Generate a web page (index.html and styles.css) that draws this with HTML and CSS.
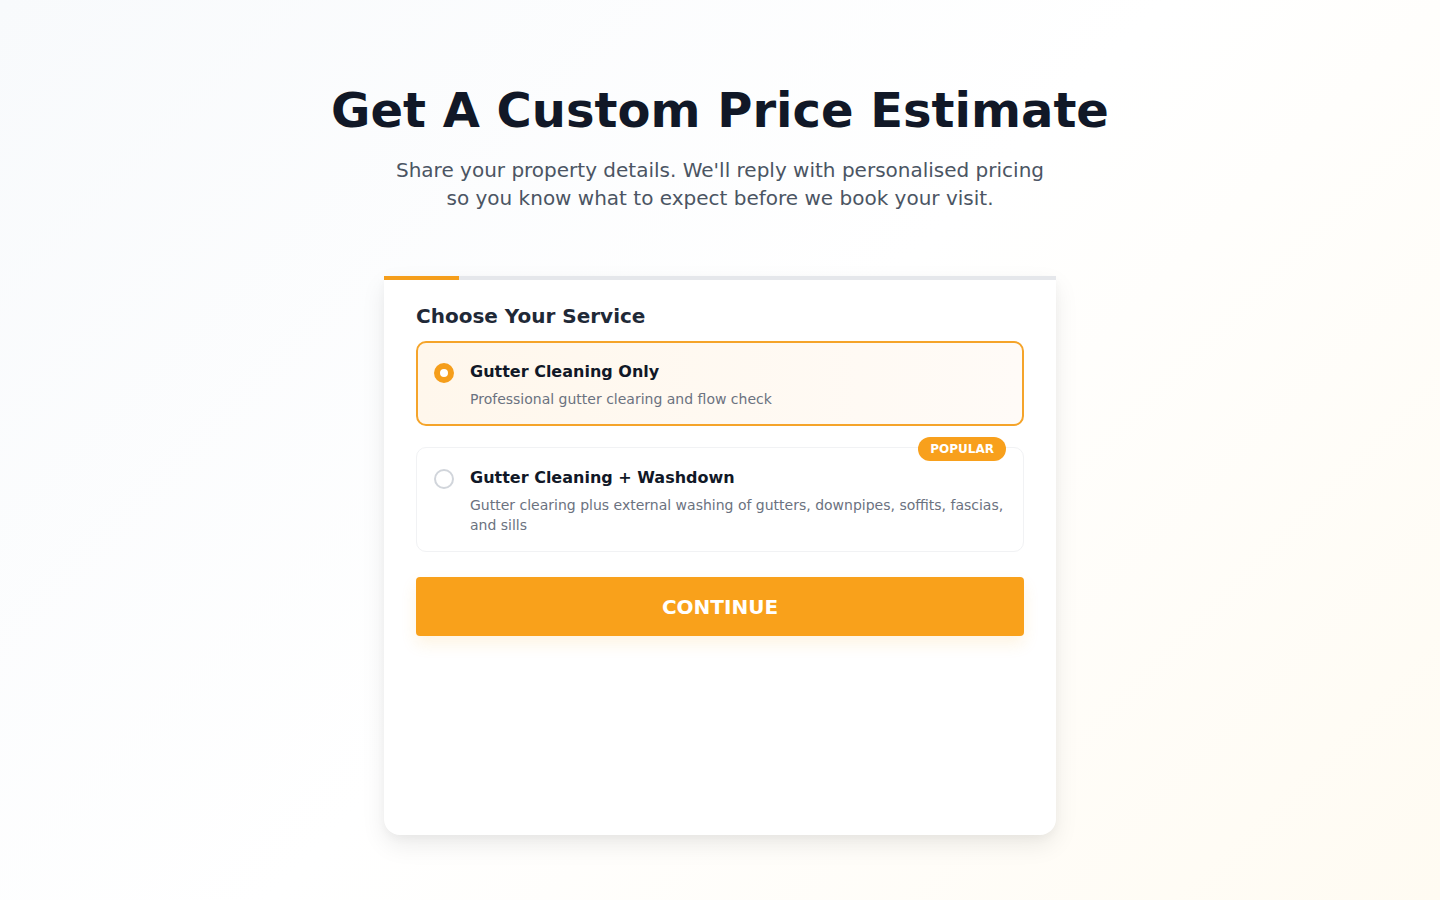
FILE: index.html
```html
<!DOCTYPE html>
<html lang="en">
<head>
<meta charset="utf-8">
<title>Get A Custom Price Estimate</title>
<link rel="stylesheet" href="styles.css">
</head>
<body>
<main class="page">
  <header class="intro">
    <h1 class="title">Get A Custom Price Estimate</h1>
    <p class="subtitle">Share your property details. We'll reply with personalised pricing<br>so you know what to expect before we book your visit.</p>
  </header>
  <section class="card">
    <div class="progress"><div class="progress-fill" style="width: 11.2%"></div></div>
    <div class="card-body">
      <h2 class="step-title">Choose Your Service</h2>
      <div class="options">
        <label class="option selected">
          <span class="radio checked"></span>
          <span class="option-text">
            <span class="option-name">Gutter Cleaning Only</span>
            <span class="option-desc">Professional gutter clearing and flow check</span>
          </span>
        </label>
        <label class="option">
          <span class="badge">POPULAR</span>
          <span class="radio"></span>
          <span class="option-text">
            <span class="option-name">Gutter Cleaning + Washdown</span>
            <span class="option-desc">Gutter clearing plus external washing of gutters, downpipes, soffits, fascias, and sills</span>
          </span>
        </label>
      </div>
      <button class="continue" type="button">CONTINUE</button>
    </div>
  </section>
</main>
</body>
</html>
```

FILE: styles.css
```css
* { box-sizing: border-box; }
html, body { margin: 0; padding: 0; }
body {
  min-height: 900px;
  font-family: "DejaVu Sans", "Noto Sans", sans-serif;
  background: linear-gradient(135deg, #f8fafc 0%, #ffffff 50%, #fffbf2 100%);
  color: #111827;
}
.page {
  display: flex;
  flex-direction: column;
  align-items: center;
  padding-top: 80px;
}
.intro { text-align: center; }
.title {
  margin: 0;
  font-size: 48px;
  line-height: 60px;
  font-weight: 700;
  color: #111827;
}
.subtitle {
  margin: 16px 0 0;
  font-size: 20px;
  line-height: 28px;
  color: #4b5563;
}
.card {
  margin-top: 64px;
  width: 672px;
  height: 559px;
  background: #ffffff;
  border-radius: 0 0 16px 16px;
  box-shadow: 0 10px 25px rgba(0,0,0,0.08), 0 4px 8px rgba(0,0,0,0.03);
}
.progress {
  height: 4px;
  background: #e5e7eb;
}
.progress-fill {
  height: 100%;
  background: #f59e1b;
}
.card-body { padding: 22px 32px 32px; }
.step-title {
  margin: 0 0 11px;
  font-size: 20px;
  line-height: 28px;
  font-weight: 700;
  color: #1f2937;
}
.options {
  display: flex;
  flex-direction: column;
  gap: 21px;
}
.option {
  position: relative;
  display: flex;
  align-items: flex-start;
  gap: 16px;
  padding: 18px 16px 16px 17px;
  border: 1px solid #f1f2f4;
  border-radius: 10px;
  background: #fff;
}
.option.selected {
  border: 2px solid #f5a42a;
  padding: 17px 15px 15px 16px;
  background: linear-gradient(90deg, #fff7ec 0%, #fffbf7 100%);
}
.radio {
  flex: none;
  width: 20px;
  height: 20px;
  margin-top: 3px;
  border-radius: 50%;
  border: 2px solid #d1d5db;
  background: #fff;
}
.radio.checked {
  border: 6px solid #f59e1b;
  background: #fff;
}
.option-text {
  display: flex;
  flex-direction: column;
  gap: 5px;
}
.option-name {
  font-size: 16px;
  line-height: 24px;
  font-weight: 700;
  color: #111827;
}
.option-desc {
  font-size: 14px;
  line-height: 20px;
  color: #6b7280;
}
.badge {
  position: absolute;
  top: -11px;
  right: 17px;
  padding: 0 12px;
  height: 24px;
  line-height: 24px;
  border-radius: 12px;
  background: #f8a01c;
  color: #fff;
  font-size: 12px;
  font-weight: 700;
}
.continue {
  display: block;
  width: 100%;
  height: 59px;
  margin-top: 25px;
  border: none;
  border-radius: 4px;
  background: #f9a11b;
  color: #fff;
  font-family: "DejaVu Sans", sans-serif;
  font-size: 20px;
  font-weight: 700;
  letter-spacing: 0;
  box-shadow: 0 8px 16px rgba(249,161,27,0.12);
}
```
